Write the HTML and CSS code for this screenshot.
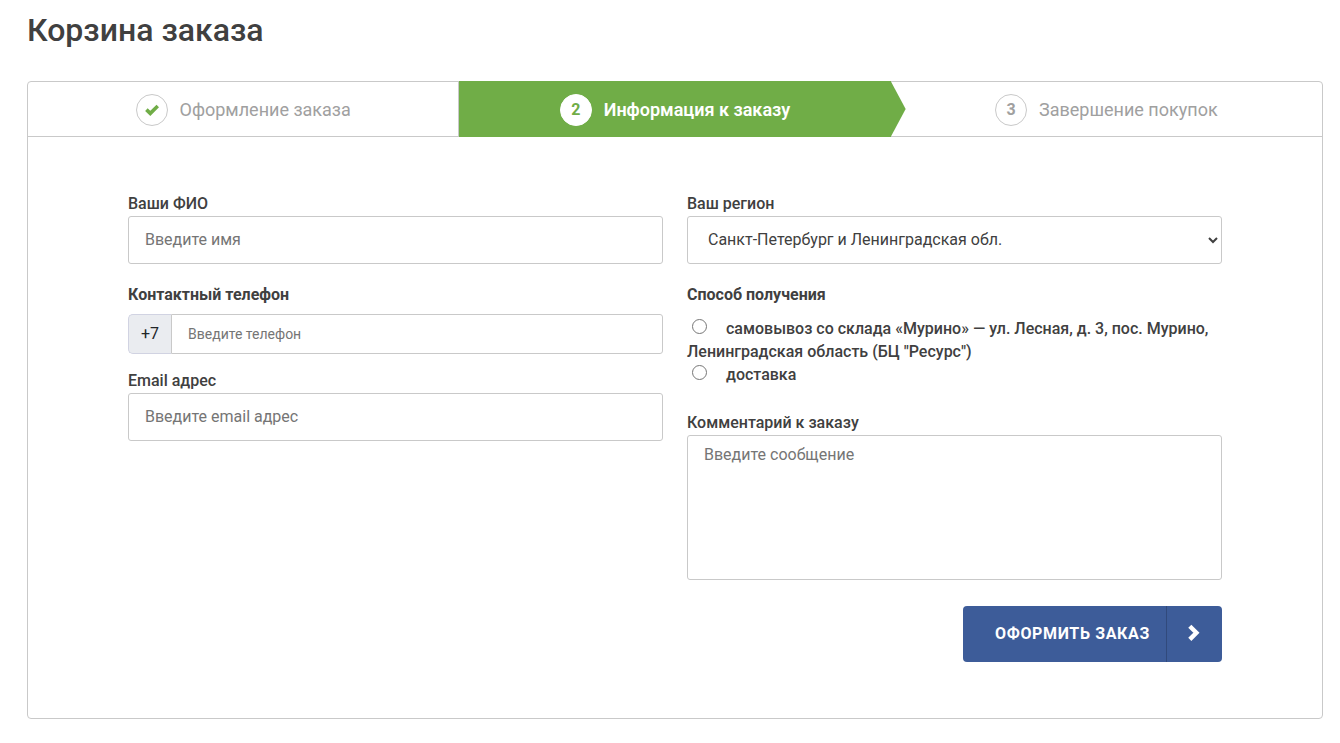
FILE: index.html
```html
<!DOCTYPE html>
<html lang="ru">
<head>
<meta charset="utf-8">
<meta name="viewport" content="width=device-width, initial-scale=1">
<title>Корзина заказа</title>
<link rel="stylesheet" href="styles.css">
</head>
<body>
<main class="page">
  <h1 class="title">Корзина заказа</h1>
  <section class="checkout">
    <ol class="steps">
      <li class="step step-done">
        <span class="step-mark">
          <svg class="check" viewBox="0 0 14 12" aria-hidden="true"><path d="M1.4 5.6 5.3 9.4 12.8 2" fill="none" stroke="currentColor" stroke-width="3.6"/></svg>
        </span>
        <span>Оформление заказа</span>
      </li>
      <li class="step step-active" aria-current="step">
        <span class="step-mark">2</span>
        <span>Информация к заказу</span>
      </li>
      <li class="step">
        <span class="step-mark">3</span>
        <span>Завершение покупок</span>
      </li>
    </ol>
    <form class="form">
      <div class="column">
        <div class="field">
          <label class="label" for="name">Ваши ФИО</label>
          <input class="control" id="name" type="text" placeholder="Введите имя">
        </div>
        <div class="field field-phone">
          <label class="label label-strong" for="phone">Контактный телефон</label>
          <div class="phone">
            <span class="prefix">+7</span>
            <input class="control phone-input" id="phone" type="tel" placeholder="Введите телефон">
          </div>
        </div>
        <div class="field">
          <label class="label" for="email">Email адрес</label>
          <input class="control" id="email" type="email" placeholder="Введите email адрес">
        </div>
      </div>
      <div class="column">
        <div class="field">
          <label class="label" for="region">Ваш регион</label>
          <select class="control select" id="region">
            <option>Санкт-Петербург и Ленинградская обл.</option>
          </select>
        </div>
        <fieldset class="field delivery">
          <legend class="label label-strong">Способ получения</legend>
          <div class="option"><input class="radio" type="radio" name="delivery" id="pickup"><label for="pickup">самовывоз со склада «Мурино» — ул. Лесная, д. 3, пос. Мурино, Ленинградская область (БЦ "Ресурс")</label></div>
          <div class="option"><input class="radio" type="radio" name="delivery" id="courier"><label for="courier">доставка</label></div>
        </fieldset>
        <div class="field">
          <label class="label" for="comment">Комментарий к заказу</label>
          <textarea class="control comment" id="comment" placeholder="Введите сообщение"></textarea>
        </div>
        <button class="submit" type="submit">
          <span class="submit-text">Оформить заказ</span>
          <span class="submit-icon">
            <svg class="chevron" viewBox="0 0 12 18" aria-hidden="true"><path d="M1.8 2.2 8.4 8.8 1.8 15.4" fill="none" stroke="currentColor" stroke-width="4.4"/></svg>
          </span>
        </button>
      </div>
    </form>
  </section>
</main>
</body>
</html>
```
FILE: styles.css
```css
* {
  box-sizing: border-box;
}

body {
  margin: 0;
  background: #fff;
  color: #404040;
  font: 400 16px/24px Roboto, "Liberation Sans", sans-serif;
}

.page {
  padding: 10px 17px 24px 27px;
}

.title {
  margin: 0 0 31px;
  font-size: 32px;
  font-weight: 500;
  line-height: 40px;
}

.checkout {
  border: 1px solid #c9c9c9;
  border-radius: 4px;
}

.steps {
  display: grid;
  grid-template-columns: repeat(3, 1fr);
  margin: 0;
  padding: 0;
  border-bottom: 1px solid #c9c9c9;
  list-style: none;
}

.step {
  display: flex;
  align-items: center;
  justify-content: center;
  gap: 12px;
  height: 54px;
  padding-top: 2px;
  color: #a0a0a0;
  font-size: 18px;
}

.step-done {
  border-right: 1px solid #c9c9c9;
}

.step-active {
  position: relative;
  height: 56px;
  margin: -1px 0;
  background: #70ad47;
  color: #fff;
  font-weight: 600;
}

.step-active::after {
  content: "";
  position: absolute;
  top: 0;
  left: 100%;
  width: 15px;
  height: 100%;
  background: #70ad47;
  clip-path: polygon(0 0, 100% 50%, 0 100%);
}

.step-mark {
  display: flex;
  align-items: center;
  justify-content: center;
  width: 32px;
  height: 32px;
  border: 1px solid #c9c9c9;
  border-radius: 50%;
  font-size: 16px;
  font-weight: 700;
}

.step-active .step-mark {
  border-color: #fff;
  background: #fff;
  color: #70ad47;
}

.check {
  width: 14px;
  height: 12px;
  color: #70ad47;
}

.form {
  display: grid;
  grid-template-columns: 1fr 1fr;
  gap: 24px;
  padding: 55px 100px 56px;
}

.column {
  display: flex;
  flex-direction: column;
}

.field {
  margin: 0 0 19px;
}

.field-phone {
  margin-bottom: 15px;
}

.label {
  display: block;
  padding: 0;
  font-weight: 500;
}

.label-strong {
  margin-bottom: 7px;
  font-weight: 700;
}

.control {
  display: block;
  width: 100%;
  height: 48px;
  padding: 0 16px 2px;
  border: 1px solid #c9c9c9;
  border-radius: 3px;
  background: #fff;
  color: #404040;
  font: inherit;
}

.control::placeholder {
  color: #757575;
  opacity: 1;
}

.select {
  padding: 0 0 2px 16px;
}

.phone {
  display: flex;
}

.prefix {
  display: flex;
  align-items: center;
  padding: 0 12px;
  border: 1px solid #d1d3e2;
  border-right: 0;
  border-radius: 5px 0 0 5px;
  background: #eaecf0;
  color: #212529;
}

.phone-input {
  flex: 1;
  height: 40px;
  padding: 0 16px;
  border-radius: 0 3px 3px 0;
  font-size: 14px;
}

.delivery {
  min-width: 0;
  margin-bottom: 25px;
  padding: 0;
  border: 0;
}

.delivery .label {
  margin-bottom: 10px;
}

.option {
  font-weight: 500;
  line-height: 23px;
}

.radio {
  width: 15px;
  height: 15px;
  margin: 0 19px 0 5px;
}

.comment {
  height: 145px;
  padding: 7px 16px;
  resize: none;
}

.submit {
  display: flex;
  align-self: flex-end;
  height: 56px;
  margin-top: 7px;
  padding: 0;
  border: 0;
  border-radius: 4px;
  background: #3d5c99;
  color: #fff;
  font: 700 16px/24px Roboto, "Liberation Sans", sans-serif;
  letter-spacing: 0.04em;
  text-transform: uppercase;
  cursor: pointer;
}

.submit-text {
  align-self: center;
  padding: 0 16px 0 32px;
}

.submit-icon {
  display: flex;
  align-items: center;
  justify-content: center;
  align-self: stretch;
  width: 56px;
  padding: 0 2px 2px 0;
  border-left: 1px solid #314a7c;
}

.chevron {
  width: 12px;
  height: 18px;
}
```
